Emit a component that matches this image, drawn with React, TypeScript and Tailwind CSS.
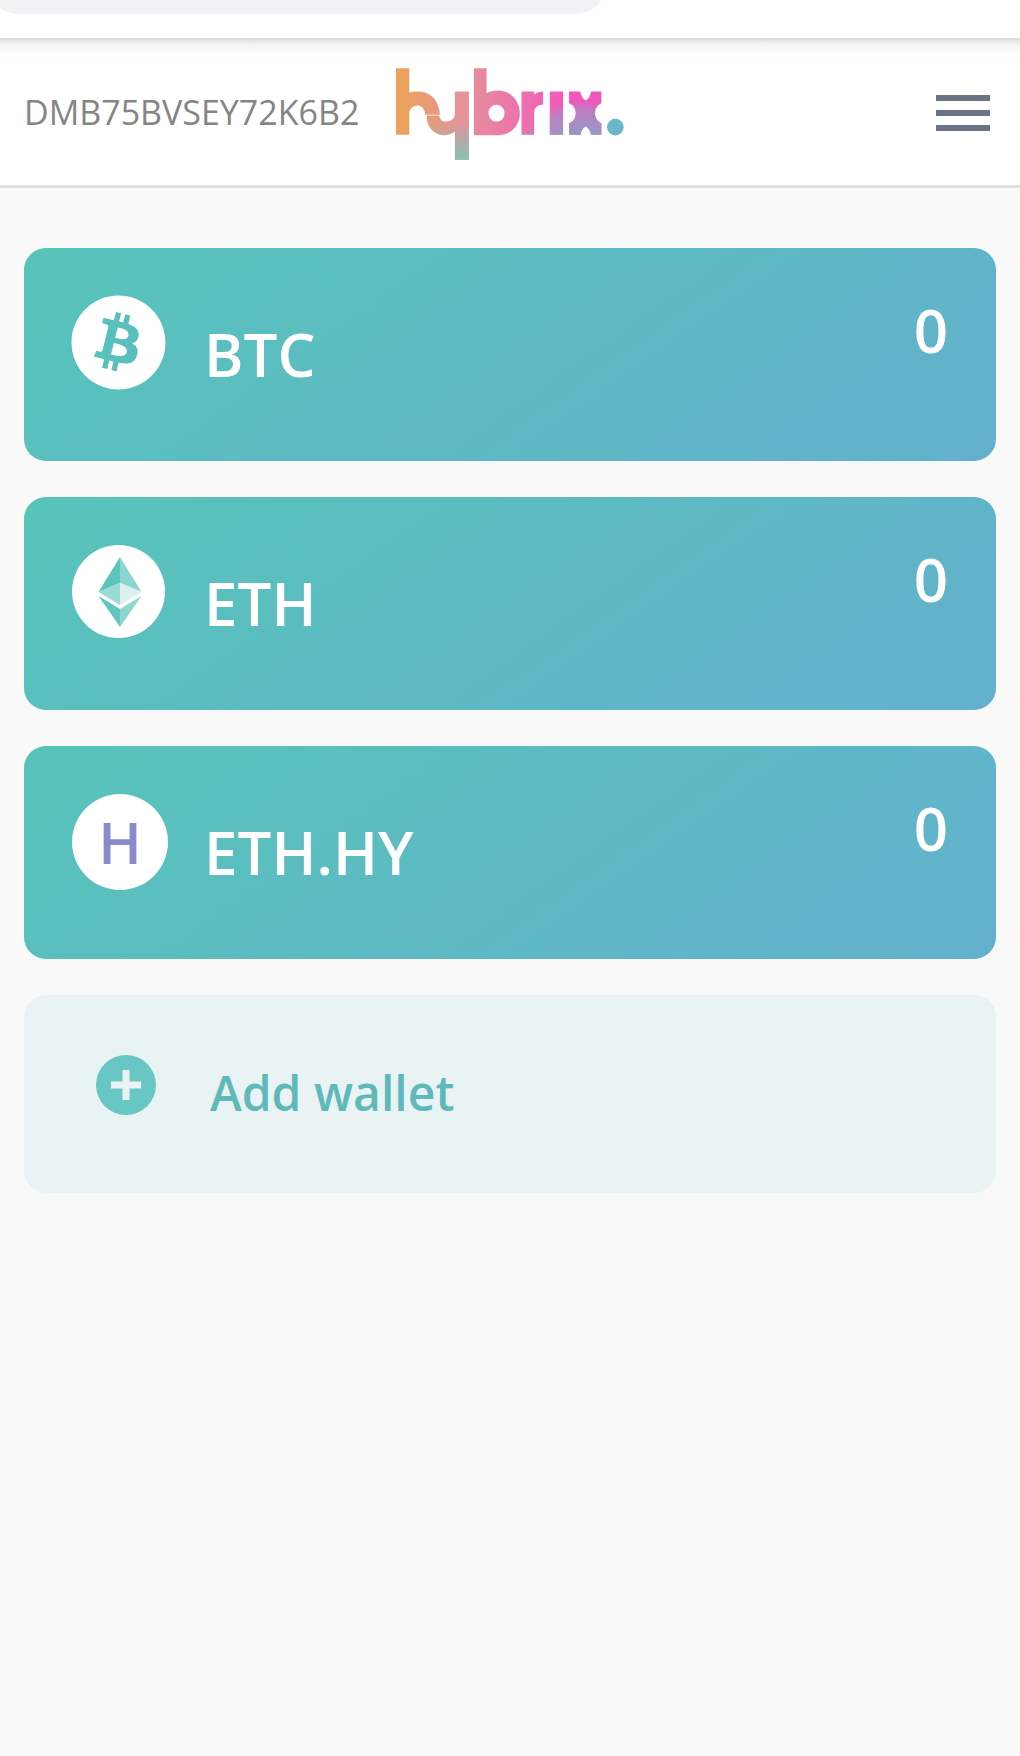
// Hybrix wallet list screen
import { FaBitcoin } from "react-icons/fa"

function HybrixLogo() {
    const h =
        "M78 55H118V128C128 125 140 124 150 125C185 128 208 155 210 195H166C165 178 155 167 142 167C128 167 118 178 118 192V255H78Z"
    const y =
        "M170 197H208C209 210 218 217 232 215C245 213 255 205 255 190V125H297V330H255V245C245 253 235 256 222 256C192 256 170 232 170 197Z"
    const rest =
        "M312 55H350V130C360 125 372 122 385 122C422 122 450 152 450 190C450 228 422 256 385 256H312Z" +
        "M380 165C366 165 356 176 356 190C356 204 366 215 380 215C394 215 404 204 404 190C404 176 394 165 380 165Z" +
        "M455 125H493V135C500 128 510 125 520 125V165C505 165 493 172 493 190V255H455Z" +
        "M540 125H580V255H540Z" +
        "M598 125H632C634 140 640 147 648 152C656 147 662 140 664 125H695V160C685 165 676 175 676 190C676 205 685 215 695 220V255H664C662 242 656 234 648 230C640 234 634 242 632 255H598V220C610 215 618 205 618 190C618 175 610 165 598 160Z"
    return (
        <svg viewBox="78 55 685 275" width="228" height="92" className="ml-[37px] mt-[5px] shrink-0">
            <defs>
                <linearGradient id="logoBase" gradientUnits="userSpaceOnUse" x1="100" y1="150" x2="600" y2="150">
                    <stop offset="0" stopColor="#eba25c" />
                    <stop offset="0.35" stopColor="#e6929a" />
                    <stop offset="1" stopColor="#f356bd" />
                </linearGradient>
                <radialGradient id="logoFade" gradientUnits="userSpaceOnUse" cx="640" cy="360" r="240">
                    <stop offset="0" stopColor="#6bb6cb" stopOpacity="0.95" />
                    <stop offset="0.5" stopColor="#6bb6cb" stopOpacity="0.65" />
                    <stop offset="0.75" stopColor="#6bb6cb" stopOpacity="0.4" />
                    <stop offset="0.87" stopColor="#6bb6cb" stopOpacity="0" />
                </radialGradient>
                <linearGradient id="logoTail" gradientUnits="userSpaceOnUse" x1="0" y1="215" x2="0" y2="330">
                    <stop offset="0" stopColor="#7fc4b4" stopOpacity="0" />
                    <stop offset="1" stopColor="#7fc4b4" stopOpacity="0.95" />
                </linearGradient>
            </defs>
            <path d={h} fill="url(#logoBase)" />
            <path d={y} fill="url(#logoBase)" />
            <path d={y} fill="url(#logoTail)" />
            <path d={rest} fill="url(#logoBase)" fillRule="evenodd" />
            <path d={rest} fill="url(#logoFade)" fillRule="evenodd" />
            <circle cx="737" cy="232" r="25" fill="#6bb6cb" />
        </svg>
    )
}

function EthIcon() {
    return (
        <div className="w-[93px] h-[93px] rounded-full bg-white shrink-0">
            <svg viewBox="0 0 93 93" width="93" height="93">
                <polygon points="48,12 26.5,47 48,38" fill="#5cc4bc" />
                <polygon points="48,12 69.5,47 48,38" fill="#8cd6d0" />
                <polygon points="48,38 26.5,47 48,60" fill="#9bdbd6" />
                <polygon points="48,38 69.5,47 48,60" fill="#dcf1ef" />
                <polygon points="26.5,51 48,64 48,82" fill="#62c6be" />
                <polygon points="69.5,51 48,64 48,82" fill="#8ed6d0" />
            </svg>
        </div>
    )
}

function WalletCard({ name, icon }: { name: string; icon: React.ReactNode }) {
    return (
        <div className="h-[213px] rounded-[22px] bg-[linear-gradient(145deg,#57c4b9,#63b0cd)] pl-[48px] pr-[48px] pt-[48px] flex items-start text-white">
            <div className="w-[132px] shrink-0">{icon}</div>
            <div className="mt-[28px] text-[60px] font-semibold leading-none">{name}</div>
            <div className="ml-auto mt-[4px] text-[60px] font-semibold leading-none">0</div>
        </div>
    )
}

export default function App() {
    return (
        <div className="min-h-[1756px] bg-[#f9f9f9] font-['Open_Sans',sans-serif]">
            {/* Browser strip */}
            <div className="h-[38px] bg-white overflow-hidden">
                <div className="-ml-[12px] -mt-[46px] w-[618px] h-[60px] rounded-[60px] bg-[#f1f2f4]" />
            </div>

            {/* Header */}
            <div className="h-[150px] bg-[linear-gradient(#dadada,#f3f3f3_6px,#fdfdfd_16px,#fff_22px)] border-b-[3px] border-[#dee2e6] pl-[24px] pr-[30px] flex items-center">
                <div className="text-[34px] text-[#858585] leading-none whitespace-nowrap w-[335px]">DMB75BVSEY72K6B2</div>
                <HybrixLogo />
                <div className="ml-auto mt-[2px] flex flex-col gap-[9px] w-[54px]">
                    <div className="h-[6px] bg-[#6c7385]" />
                    <div className="h-[6px] bg-[#6c7385]" />
                    <div className="h-[6px] bg-[#6c7385]" />
                </div>
            </div>

            {/* Wallets */}
            <div className="px-[24px] pt-[60px] flex flex-col gap-[36px]">
                <WalletCard name="BTC" icon={<div className="w-[93px] h-[93px] flex items-center justify-center"><FaBitcoin size={97} color="#ffffff" className="shrink-0" /></div>} />
                <WalletCard name="ETH" icon={<EthIcon />} />
                <WalletCard
                    name="ETH.HY"
                    icon={
                        <div className="w-[96px] h-[96px] rounded-full bg-white flex items-center justify-center text-[#8a89cb] text-[58px] font-semibold leading-none">
                            H
                        </div>
                    }
                />
                <div className="h-[198px] rounded-[22px] bg-[#eaf3f4] pl-[72px] flex items-start">
                    <div className="mt-[60px] w-[60px] h-[60px] rounded-full bg-[#69c7c3] flex items-center justify-center shrink-0">
                        <svg viewBox="0 0 30 30" width="30" height="30">
                            <path d="M11.5 0h7v11.5H30v7H18.5V30h-7V18.5H0v-7h11.5z" fill="#eaf3f4" />
                        </svg>
                    </div>
                    <div className="ml-[54px] mt-[74px] text-[48px] font-semibold leading-none text-[#5fb9ba]">Add wallet</div>
                </div>
            </div>
        </div>
    )
}
